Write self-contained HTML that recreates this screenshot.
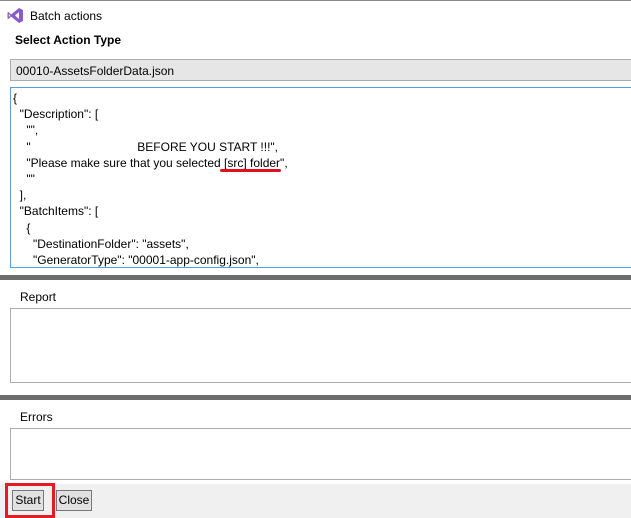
<!DOCTYPE html>
<html><head><meta charset="utf-8"><style>
body{margin:0;width:631px;height:518px;background:#fff;font-family:"Liberation Sans",sans-serif;font-size:12px;color:#000;position:relative;overflow:hidden}
.a{position:absolute}
.code div{height:16.2px;line-height:16.2px;white-space:pre}
</style></head><body>
<div class="a" style="left:0;top:0;width:631px;height:1px;background:#888"></div>
<svg class="a" style="left:7px;top:7px" width="17" height="17" viewBox="0 0 17 17"><path d="M12 1 L16 3 V14 L12 16 L4 9.5 L1.5 12 L0.5 11.5 V5.5 L1.5 5 L4 7.5 Z M12 5 L8 8.5 L12 12 Z M1.8 7 V10 L3.2 8.5Z" fill="#8a5cc7" fill-rule="evenodd"/></svg>
<div class="a" style="left:30px;top:9px;font-size:12px">Batch actions</div>
<div class="a" style="left:15px;top:33px;font-weight:bold;font-size:12px">Select Action Type</div>
<div class="a" style="left:10px;top:59px;width:621px;height:20px;background:#e6e6e6;border:1px solid #acacac;border-right:none"></div>
<div class="a" style="left:16px;top:64px">00010-AssetsFolderData.json</div>
<div class="a" style="left:10px;top:87px;width:620px;height:179px;border:1px solid #5a9fe0;border-right:none"></div>
<div class="a code" style="left:13px;top:90px">
<div>{</div>
<div>  "Description": [</div>
<div>    "",</div>
<div>    "                                BEFORE YOU START !!!",</div>
<div>    "Please make sure that you selected [src] folder",</div>
<div>    ""</div>
<div>  ],</div>
<div>  "BatchItems": [</div>
<div>    {</div>
<div>      "DestinationFolder": "assets",</div>
<div>      "GeneratorType": "00001-app-config.json",</div>
</div>
<div class="a" style="left:220px;top:169px;width:61px;height:3px;background:#e01020;border-radius:2px"></div>
<div class="a" style="left:0;top:275px;width:631px;height:5px;background:#6d6d6d"></div>
<div class="a" style="left:20px;top:290px">Report</div>
<div class="a" style="left:10px;top:308px;width:621px;height:73px;border:1px solid #acacac;border-right:none"></div>
<div class="a" style="left:0;top:395px;width:631px;height:5px;background:#6d6d6d"></div>
<div class="a" style="left:20px;top:410px">Errors</div>
<div class="a" style="left:10px;top:428px;width:621px;height:50px;border:1px solid #acacac;border-right:none"></div>
<div class="a" style="left:0;top:484px;width:631px;height:34px;background:#f0f0f0"></div>
<div class="a" style="left:5px;top:483px;width:44px;height:29px;border:3px solid #e31b23"></div>
<div class="a" style="left:12px;top:490px;width:30px;height:19px;background:#e1e1e1;border:1px solid #777;text-align:center;line-height:19px">Start</div>
<div class="a" style="left:56px;top:490px;width:34px;height:19px;background:#e1e1e1;border:1px solid #777;text-align:center;line-height:19px">Close</div>
</body></html>
